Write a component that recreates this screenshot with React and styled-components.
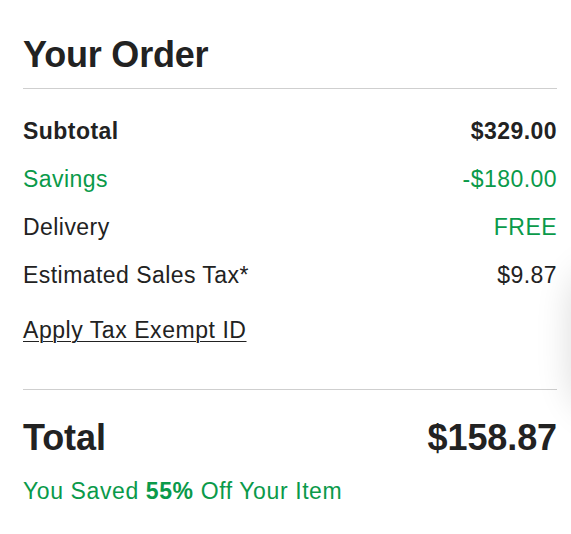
import styled, { createGlobalStyle } from "styled-components";

const GlobalStyle = createGlobalStyle`
  body {
    margin: 0;
    background: #fff;
    font-family: "Liberation Sans", Arial, sans-serif;
    color: #222;
  }
`;

const Summary = styled.section`
  padding: 35px 14px 30px 23px;
`;

const Title = styled.h2`
  margin: 0 0 13px;
  font-size: 36px;
  line-height: 40px;
  font-weight: 700;
  letter-spacing: -0.2px;
`;

const Divider = styled.hr`
  margin: 0;
  border: 0;
  border-top: 1px solid #cfcfcf;
`;

const Lines = styled.div`
  padding-top: 18px;
`;

const Row = styled.div`
  display: flex;
  justify-content: space-between;
  align-items: baseline;
  font-size: 23px;
  line-height: 48px;
  letter-spacing: 0.45px;
  font-weight: ${(p) => (p.$bold ? 700 : 400)};
  color: ${(p) => (p.$green ? "#0a9a4a" : "#222")};
`;

const Value = styled.span`
  color: ${(p) => (p.$green ? "#0a9a4a" : "inherit")};
`;

const ExemptLink = styled.a`
  display: inline-block;
  margin: 7px 0 35px;
  font-size: 23px;
  line-height: 48px;
  letter-spacing: 0.55px;
  color: #222;
  text-decoration: underline;
  text-decoration-thickness: 1px;
  text-underline-offset: 3px;
  cursor: pointer;
`;

const TotalRow = styled.div`
  display: flex;
  justify-content: space-between;
  align-items: baseline;
  margin-top: 26px;
  font-size: 36px;
  line-height: 44px;
  font-weight: 700;
  letter-spacing: -0.1px;
`;

const SavedNote = styled.p`
  margin: 16px 0 0;
  font-size: 23px;
  line-height: 30px;
  letter-spacing: 0.6px;
  color: #0a9a4a;

  strong {
    font-weight: 700;
  }
`;

const EdgeShadow = styled.div`
  position: fixed;
  right: -80px;
  top: 265px;
  width: 80px;
  height: 150px;
  border-radius: 40px;
  background: #fff;
  box-shadow: 0 0 36px rgba(0, 0, 0, 0.14);
`;

const lines = [
  { label: "Subtotal", value: "$329.00", bold: true },
  { label: "Savings", value: "-$180.00", green: true },
  { label: "Delivery", value: "FREE", greenValue: true },
  { label: "Estimated Sales Tax*", value: "$9.87" },
];

export default function App() {
  return (
    <>
      <GlobalStyle />
      <Summary>
        <Title>Your Order</Title>
        <Divider />
        <Lines>
          {lines.map((l) => (
            <Row key={l.label} $bold={l.bold} $green={l.green}>
              <span>{l.label}</span>
              <Value $green={l.greenValue}>{l.value}</Value>
            </Row>
          ))}
          <ExemptLink>Apply Tax Exempt ID</ExemptLink>
        </Lines>
        <Divider />
        <TotalRow>
          <span>Total</span>
          <span>$158.87</span>
        </TotalRow>
        <SavedNote>
          You Saved <strong>55%</strong> Off Your Item
        </SavedNote>
      </Summary>
      <EdgeShadow />
    </>
  );
}
